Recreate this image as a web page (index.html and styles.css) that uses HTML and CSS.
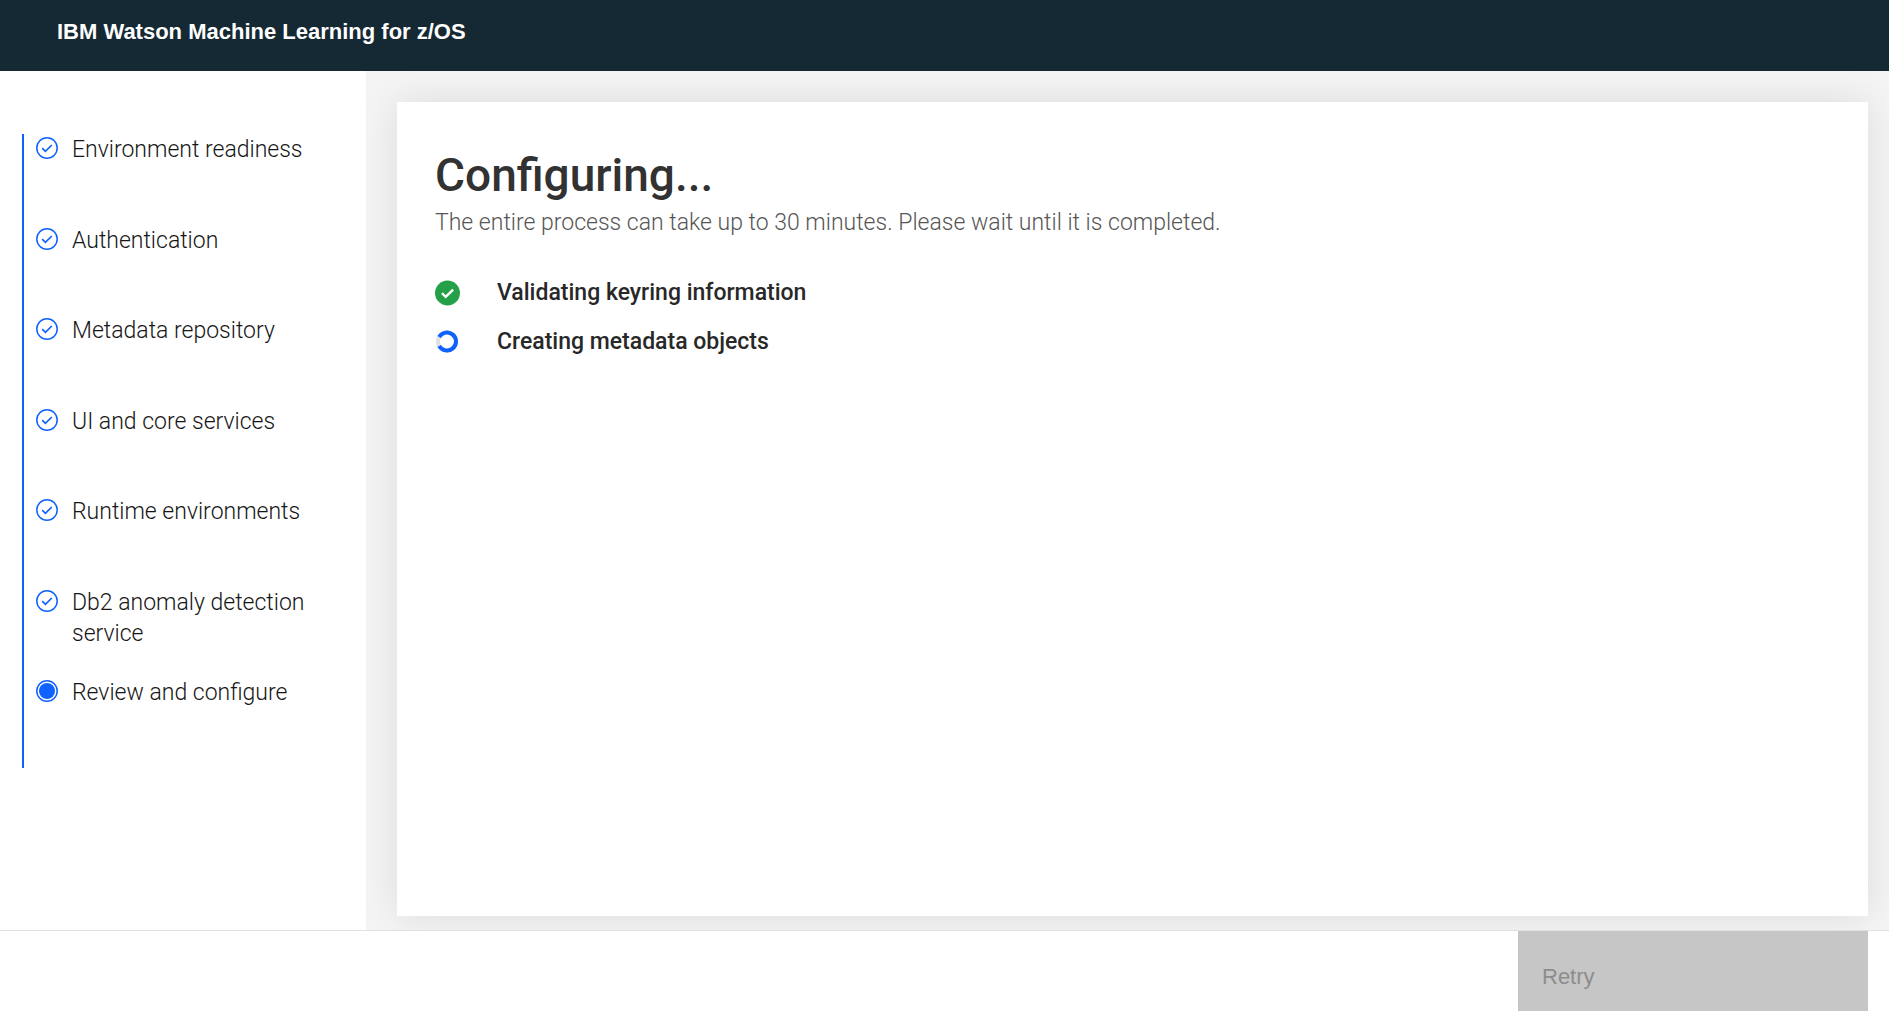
FILE: index.html
```html
<!DOCTYPE html>
<html lang="en">
<head>
<meta charset="utf-8">
<meta name="viewport" content="width=device-width, initial-scale=1">
<title>IBM Watson Machine Learning for z/OS</title>
<link rel="stylesheet" href="styles.css">
</head>
<body>
<svg class="sprite" aria-hidden="true">
  <symbol id="step-done" viewBox="0 0 22 22">
    <circle cx="11" cy="11" r="10.2" fill="none" stroke="currentColor" stroke-width="1.5"/>
    <path d="M6.2 11.2l3.2 3.2 6.4-6.4" fill="none" stroke="currentColor" stroke-width="1.7"/>
  </symbol>
  <symbol id="step-current" viewBox="0 0 22 22">
    <circle cx="11" cy="11" r="10.2" fill="none" stroke="currentColor" stroke-width="1.5"/>
    <circle cx="11" cy="11" r="8" fill="currentColor"/>
  </symbol>
</svg>

<header class="header">
  <span class="header-title">IBM Watson Machine Learning for z/OS</span>
</header>

<div class="body">
  <nav class="sidebar" aria-label="Configuration steps">
    <ol class="steps">
      <li class="step"><svg class="step-icon"><use href="#step-done"/></svg><span class="step-label">Environment readiness</span></li>
      <li class="step"><svg class="step-icon"><use href="#step-done"/></svg><span class="step-label">Authentication</span></li>
      <li class="step"><svg class="step-icon"><use href="#step-done"/></svg><span class="step-label">Metadata repository</span></li>
      <li class="step"><svg class="step-icon"><use href="#step-done"/></svg><span class="step-label">UI and core services</span></li>
      <li class="step"><svg class="step-icon"><use href="#step-done"/></svg><span class="step-label">Runtime environments</span></li>
      <li class="step"><svg class="step-icon"><use href="#step-done"/></svg><span class="step-label">Db2 anomaly detection service</span></li>
      <li class="step" aria-current="step"><svg class="step-icon"><use href="#step-current"/></svg><span class="step-label">Review and configure</span></li>
    </ol>
  </nav>

  <main class="content">
    <section class="panel">
      <h1 class="panel-title">Configuring...</h1>
      <p class="panel-text">The entire process can take up to 30 minutes. Please wait until it is completed.</p>
      <ul class="tasks">
        <li class="task">
          <svg class="task-icon" viewBox="0 0 26 26" aria-hidden="true">
            <circle cx="12.5" cy="13" r="12.5" fill="#24a148"/>
            <path d="M6.9 13.2l3.8 3.6 7.4-7.2" fill="none" stroke="#fff" stroke-width="2.4"/>
          </svg>
          <span>Validating keyring information</span>
        </li>
        <li class="task">
          <svg class="task-icon" viewBox="0 0 26 26" aria-hidden="true">
            <circle cx="12" cy="12.5" r="9" fill="none" stroke="#e0e0e0" stroke-width="4"/>
            <path d="M4.2 8A9 9 0 1 1 4.2 17" fill="none" stroke="#0f62fe" stroke-width="4"/>
          </svg>
          <span>Creating metadata objects</span>
        </li>
      </ul>
    </section>
  </main>
</div>

<footer class="footer">
  <button class="retry" type="button" disabled>Retry</button>
</footer>
</body>
</html>
```
FILE: styles.css
```css
* {
  box-sizing: border-box;
}

body {
  display: flex;
  flex-direction: column;
  min-height: 100vh;
  margin: 0;
  background: #fff;
  color: #161616;
  font-family: Roboto, "Noto Sans", sans-serif;
  font-size: 23px;
  line-height: 31px;
}

.sprite {
  display: none;
}

.header {
  padding: 16px 57px 24px;
  background: #152934;
  color: #fff;
  font-family: "Liberation Sans", Arial, sans-serif;
  font-size: 22px;
  font-weight: 700;
}

.body {
  display: flex;
  flex: 1;
}

.sidebar {
  flex: 0 0 366px;
  padding: 63px 22px 0;
}

.steps {
  display: grid;
  grid-auto-rows: 1fr;
  min-height: 634px;
  margin: 0;
  padding: 0 0 0 12px;
  border-left: 2px solid #0f62fe;
  list-style: none;
}

.step {
  display: flex;
  align-items: flex-start;
  gap: 14px;
}

.step-icon {
  flex: none;
  width: 22px;
  height: 22px;
  margin-top: 3px;
  color: #0f62fe;
}

.step-label {
  max-width: 240px;
  font-weight: 300;
}

.content {
  display: flex;
  flex: 1;
  padding: 31px 21px 14px 31px;
  overflow: hidden;
  background: #f4f4f4;
}

.panel {
  flex: 1;
  padding: 43px 38px;
  background: #fff;
  box-shadow: 0 0 36px rgba(0, 0, 0, 0.1);
}

.panel-title {
  margin: 0;
  color: #323232;
  font-size: 46px;
  font-weight: 500;
  line-height: 60px;
}

.panel-text {
  margin: 2px 0 0;
  color: #565656;
  font-weight: 300;
}

.tasks {
  display: grid;
  gap: 18px;
  margin: 39px 0 0;
  padding: 0;
  list-style: none;
}

.task {
  display: flex;
  align-items: center;
  gap: 36px;
  color: #282828;
  font-weight: 500;
}

.task-icon {
  flex: none;
  width: 26px;
  height: 26px;
}

.footer {
  display: flex;
  justify-content: flex-end;
  padding-right: 21px;
  border-top: 1px solid #e0e0e0;
}

.retry {
  width: 350px;
  padding: 30px 24px 19px;
  border: 0;
  background: #c6c6c6;
  color: #8d8d8d;
  font-family: "Liberation Sans", Arial, sans-serif;
  font-size: 22px;
  line-height: 31px;
  text-align: left;
}
```
